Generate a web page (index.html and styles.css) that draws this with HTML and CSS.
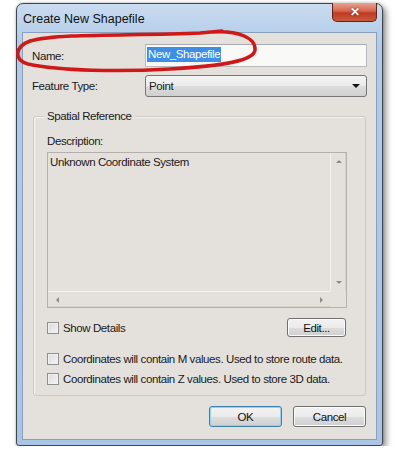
FILE: index.html
```html
<!DOCTYPE html>
<html lang="en">
<head>
    <meta charset="UTF-8">
    <meta name="viewport" content="width=device-width, initial-scale=1.0">
    <title>Create New Shapefile</title>
    <link rel="stylesheet" href="styles.css">
</head>
<body>
    <div class="window">
        <div class="titlebar">
            <span class="title">Create New Shapefile</span>
            <span class="close">&#x2715;</span>
        </div>
        <div class="client">
            <div class="fields">
                <label for="name">Name:</label>
                <div class="input" id="name"><span class="selected">New_Shapefile</span></div>
                <label for="featureType">Feature Type:</label>
                <div class="select" id="featureType">
                    <span>Point</span>
                    <span class="arrow"></span>
                </div>
            </div>

            <div class="group">
                <span class="group-title">Spatial Reference</span>
                <div class="desc-label">Description:</div>
                <div class="textarea">
                    <div class="text">Unknown Coordinate System</div>
                    <div class="vscroll">
                        <span class="tri up"></span>
                        <span class="tri down"></span>
                    </div>
                    <div class="hscroll">
                        <span class="tri left"></span>
                        <span class="tri right"></span>
                    </div>
                    <div class="corner"></div>
                </div>
                <div class="details-row">
                    <div class="check-row"><span class="checkbox"></span>Show Details</div>
                    <button class="btn edit">Edit...</button>
                </div>
                <div class="check-row first">
                    <span class="checkbox"></span>Coordinates will contain M values. Used to store route data.
                </div>
                <div class="check-row second">
                    <span class="checkbox"></span>Coordinates will contain Z values. Used to store 3D data.
                </div>
            </div>

            <div class="buttons">
                <button class="btn ok">OK</button>
                <button class="btn">Cancel</button>
            </div>
        </div>
    </div>

    <!-- red marker circle drawn over the Name field -->
    <svg class="marker" width="395" height="455" viewBox="0 0 395 455">
        <path d="M 212 32 C 238 30, 256 38, 255 50 C 254 61, 222 66, 170 69 C 120 72, 60 71, 28 64 C 14 60, 14 47, 30 41 C 60 33, 130 36, 200 33 L 222 31" fill="none" stroke="#d01818" stroke-width="3.5" stroke-linecap="round"/>
    </svg>
</body>
</html>
```

FILE: styles.css
```css
* {
    box-sizing: border-box;
    margin: 0;
    padding: 0;
}
body {
    background: #ffffff;
    font-family: "Liberation Sans", Arial, sans-serif;
    font-size: 11px;
    color: #1a1a1a;
    padding: 3px 0 0 16px;
    position: relative;
}
.window {
    width: 367px;
    border: 1px solid #3d4650;
    border-radius: 7px 7px 3px 3px;
    background: linear-gradient(#c9dbf0, #b2cbe9 40px, #aac4e6);
    box-shadow: 3px 3px 6px rgba(0, 0, 0, 0.45), 0 0 2px rgba(0, 0, 0, 0.3);
}
.titlebar {
    height: 28px;
    display: flex;
    justify-content: space-between;
    align-items: flex-start;
}
.title {
    font-size: 12.5px;
    color: #111;
    padding: 8px 0 0 6px;
}
.close {
    width: 45px;
    height: 19px;
    margin: -1px 5px 0 0;
    border: 1px solid #5e2216;
    border-top: none;
    border-radius: 0 0 5px 5px;
    background: linear-gradient(#e9a392, #d6654d 45%, #c03a20 55%, #c85a3e);
    color: #fff;
    font-weight: bold;
    font-size: 12px;
    text-align: center;
    line-height: 18px;
    text-shadow: 0 0 2px #6b1b0e;
}
.client {
    margin: 0 5px 5px;
    border: 1px solid #8a9fba;
    background: #e4e1dc;
    padding: 11px 10px 12px 0;
    font-size: 11.5px;
    letter-spacing: -0.4px;
}
.fields {
    display: grid;
    grid-template-columns: 113px 222px;
    row-gap: 8px;
    padding-left: 9px;
    align-items: center;
}
.input {
    height: 23px;
    border: 1px solid #b9bbbf;
    border-top-color: #a9abb0;
    background: #f9f9f8;
    padding: 3px 0 0 1px;
}
.selected {
    background: #3d8ee6;
    color: #fff;
    padding: 1px 1px 2px;
}
.select {
    height: 22px;
    border: 1px solid #767676;
    border-radius: 3px;
    background: linear-gradient(#f3f3f3, #ebebeb 50%, #dddddd 51%, #cfcfcf);
    display: flex;
    justify-content: space-between;
    align-items: center;
    padding: 0 6px 0 3px;
}
.arrow {
    border-left: 4px solid transparent;
    border-right: 4px solid transparent;
    border-top: 4px solid #111;
}
.group {
    margin: 19px 0 0 10px;
    border: 1px solid #cdc9c2;
    border-radius: 3px;
    box-shadow: inset 1px 1px 0 #f6f5f3;
    padding: 0 18px 9px 13px;
}
.group-title {
    display: block;
    width: max-content;
    margin: -8px 0 0 -3px;
    padding: 0 3px;
    background: #e4e1dc;
    line-height: 14px;
}
.desc-label {
    margin-top: 11px;
    line-height: 14px;
}
.textarea {
    margin-top: 4px;
    height: 156px;
    border: 1px solid #b4b1ac;
    background: #e4e1dc;
    display: grid;
    grid-template-columns: 1fr 16px;
    grid-template-rows: 1fr 16px;
}
.text {
    padding: 3px 2px;
}
.vscroll {
    border-left: 1px solid #f3f2f0;
    box-shadow: inset -1px 0 0 #d6d3ce;
    display: flex;
    flex-direction: column;
    justify-content: space-between;
    align-items: center;
    padding: 7px 0 7px;
}
.hscroll {
    border-top: 1px solid #f3f2f0;
    box-shadow: inset 0 -1px 0 #d6d3ce;
    display: flex;
    justify-content: space-between;
    align-items: center;
    padding: 0 7px 0 8px;
}
.corner {
    background: #e4e1dc;
}
.tri {
    width: 0;
    height: 0;
}
.up {
    border-left: 3px solid transparent;
    border-right: 3px solid transparent;
    border-bottom: 3px solid #8d8b87;
}
.down {
    border-left: 3px solid transparent;
    border-right: 3px solid transparent;
    border-top: 3px solid #8d8b87;
}
.left {
    border-top: 3px solid transparent;
    border-bottom: 3px solid transparent;
    border-right: 3px solid #8d8b87;
}
.right {
    border-top: 3px solid transparent;
    border-bottom: 3px solid transparent;
    border-left: 3px solid #8d8b87;
}
.details-row {
    margin-top: 10px;
    display: flex;
    justify-content: space-between;
    align-items: center;
    padding-right: 1px;
}
.check-row {
    display: flex;
    align-items: center;
    gap: 4px;
    height: 14px;
    white-space: nowrap;
}
.first {
    margin-top: 15px;
}
.second {
    margin-top: 6px;
}
.checkbox {
    flex-shrink: 0;
    width: 12px;
    height: 12px;
    border: 1px solid #8e8f8f;
    background: linear-gradient(135deg, #dcdcdc, #f4f4f4);
    box-shadow: inset 0 0 0 1px #f0f0f0;
}
.btn {
    font-family: inherit;
    font-size: 11.5px;
    letter-spacing: -0.4px;
    color: #111;
    height: 21px;
    width: 73px;
    border: 1px solid #707070;
    border-radius: 3px;
    background: linear-gradient(#f2f2f2, #ebebeb 50%, #dddddd 51%, #cfcfcf);
    box-shadow: inset 0 0 0 1px #fbfbfb;
}
.edit {
    width: 59px;
    height: 19px;
}
.buttons {
    margin-top: 10px;
    display: flex;
    justify-content: flex-end;
    gap: 11px;
}
.ok {
    border-color: #3c7fb1;
    box-shadow: inset 0 0 0 1px #8fd2f3;
}
.marker {
    position: absolute;
    left: 0;
    top: 0;
    pointer-events: none;
}
```
